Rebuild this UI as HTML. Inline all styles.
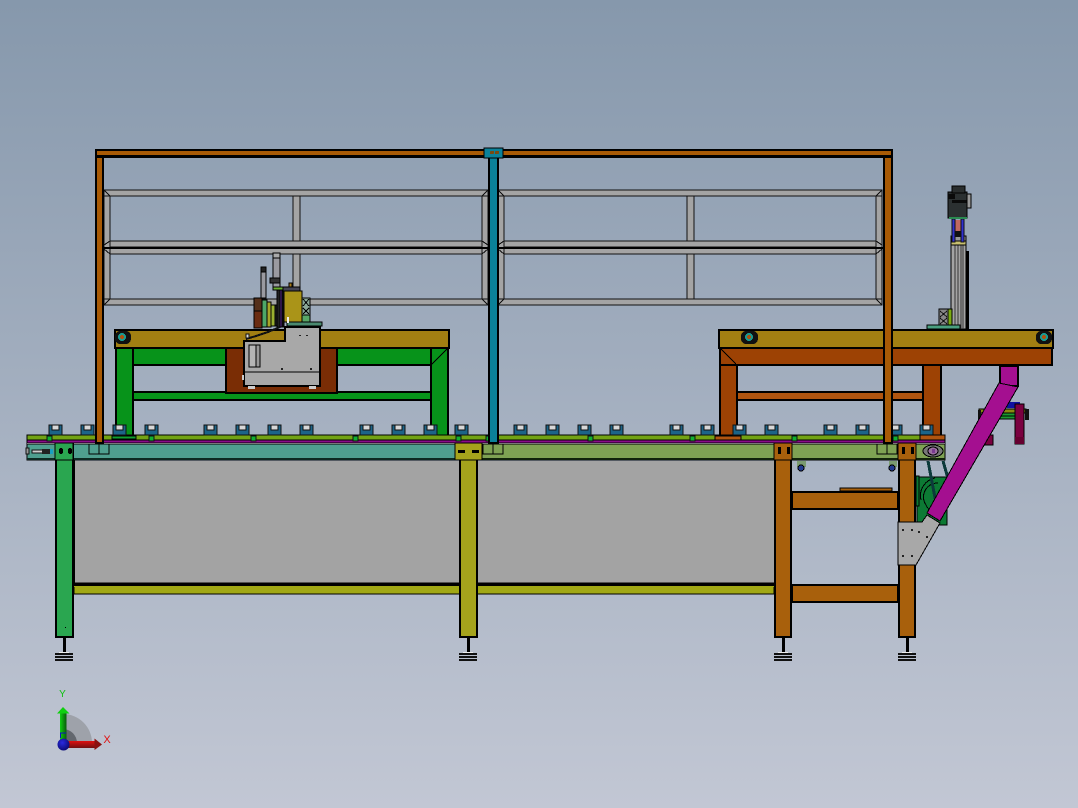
<!DOCTYPE html>
<html><head><meta charset="utf-8"><title>CAD assembly</title>
<style>html,body{margin:0;padding:0;width:1078px;height:808px;overflow:hidden}svg{display:block}</style></head>
<body>
<svg width="1078" height="808" viewBox="0 0 1078 808" xmlns="http://www.w3.org/2000/svg" shape-rendering="crispEdges">
<defs>
<linearGradient id="bg" x1="0" y1="0" x2="0" y2="1"><stop offset="0" stop-color="#8698ac"/><stop offset="1" stop-color="#c2c7d4"/></linearGradient>
<linearGradient id="rd" x1="0" y1="0" x2="0" y2="1"><stop offset="0" stop-color="#e01010"/><stop offset="1" stop-color="#701010"/></linearGradient>
<linearGradient id="gr" x1="0" y1="0" x2="1" y2="0"><stop offset="0" stop-color="#10d010"/><stop offset="1" stop-color="#0a5a0a"/></linearGradient>
<radialGradient id="bl" cx=".4" cy=".35" r=".7"><stop offset="0" stop-color="#2a2ae0"/><stop offset="1" stop-color="#0a0a70"/></radialGradient>
<g id="c"><rect x="0" y="0" width="13" height="10" fill="#1c6488" stroke="#111" stroke-width="1"/><rect x="3" y="0" width="7" height="5" fill="#d8d8d8" stroke="#111" stroke-width="1"/></g>
<g id="t"><rect x="0" y="0" width="5" height="5" fill="#10b030" stroke="#111" stroke-width="1"/></g>
<g id="f"><rect x="8" y="0" width="3" height="17" fill="#000"/><rect x="0" y="16" width="18" height="2" fill="#111"/><rect x="0" y="19" width="18" height="2" fill="#111"/><rect x="0" y="22" width="18" height="2" fill="#111"/><rect x="4" y="15" width="10" height="1" fill="#eee"/></g>
<g id="win" fill="#a4a4a4" stroke="#111" stroke-width="1">
<rect x="0" y="0" width="384" height="6"/><rect x="0" y="51" width="384" height="6"/><rect x="0" y="58" width="384" height="6"/><rect x="0" y="109" width="384" height="6"/>
<rect x="0" y="6" width="6" height="103"/><rect x="378" y="6" width="6" height="103"/>
<rect x="189" y="6" width="7" height="45"/><rect x="189" y="64" width="7" height="45"/>
<path d="M0 0L6 6M384 0L378 6M0 115L6 109M384 115L378 109M378 51L384 55M378 64L384 59M0 55L6 51M0 59L6 64" fill="none"/>
</g>
</defs>
<rect width="1078" height="808" fill="url(#bg)"/>

<!-- window frames -->
<use href="#win" x="104" y="190"/>
<use href="#win" x="498" y="190"/>
<rect x="104" y="247" width="384" height="2" fill="#000"/><rect x="498" y="247" width="385" height="2" fill="#000"/>

<!-- left table -->
<g stroke="#000" stroke-width="2">
<rect x="116" y="347" width="17" height="90" fill="#07931a"/>
<rect x="431" y="347" width="17" height="90" fill="#07931a"/>
<rect x="133" y="348" width="298" height="17" fill="#07931a"/>
<rect x="133" y="392" width="298" height="8" fill="#07931a"/>
<rect x="226" y="348" width="111" height="45" fill="#7a2d05"/>
<rect x="115" y="330" width="334" height="18" fill="#a27f12"/>
</g>
<path d="M431 365L447 349" stroke="#000" stroke-width="1" fill="none"/>
<rect x="115" y="331" width="16" height="13" rx="5" fill="#111"/><circle cx="122" cy="337" r="4" fill="#1a9a90"/><circle cx="122" cy="337" r="2" fill="#b05010"/>

<!-- head mechanisms -->
<g stroke="#000" stroke-width="1">
<rect x="261" y="272" width="5" height="26" fill="#9a9aa0"/><rect x="261" y="267" width="5" height="5" fill="#222"/>
<rect x="273" y="258" width="7" height="29" fill="#9a9aa0"/><rect x="273" y="253" width="7" height="5" fill="#aaa"/><rect x="270" y="278" width="10" height="5" fill="#333"/>
<rect x="273" y="287" width="10" height="3" fill="#6ab030"/>
<rect x="254" y="298" width="8" height="30" fill="#6a2c12"/><rect x="254" y="298" width="8" height="13" fill="#55301a"/>
<rect x="262" y="300" width="5" height="27" fill="#4ea868"/><rect x="267" y="302" width="4" height="25" fill="#a6a628"/><rect x="271" y="305" width="4" height="21" fill="#9ab030"/><rect x="275" y="305" width="2" height="21" fill="#222"/>
<rect x="277" y="290" width="3" height="37" fill="#222"/><rect x="280" y="290" width="2" height="37" fill="#5a2a90"/><rect x="282" y="290" width="2" height="37" fill="#111"/>
<rect x="284" y="291" width="18" height="31" fill="#aa9418"/>
<rect x="283" y="287" width="17" height="4" fill="#445"/><rect x="289" y="283" width="3" height="4" fill="#a87a18"/>
<rect x="302" y="298" width="8" height="17" fill="#8aa898"/><path d="M303 299L309 306M309 299L303 306M303 308L309 314M309 308L303 314" fill="none"/>
<rect x="302" y="315" width="8" height="11" fill="#58a868"/>
<rect x="287" y="322" width="35" height="4" fill="#4a8a70"/>
</g>
<rect x="287" y="317" width="2" height="6" fill="#eee"/>

<!-- grey head body -->
<path d="M244 386V341H285V327H320V386Z" fill="#a8a8a8" stroke="#000" stroke-width="2"/>
<path d="M246 339L256 336L268 332L280 327" stroke="#111" stroke-width="2" fill="none"/>
<path d="M244 372H320" stroke="#000" stroke-width="1"/>
<rect x="249" y="345" width="11" height="22" fill="#b5b5b5" stroke="#000" stroke-width="1"/><rect x="256" y="345" width="4" height="22" fill="#999" stroke="#000" stroke-width="1"/>
<rect x="248" y="386" width="7" height="3" fill="#ccc"/><rect x="309" y="386" width="7" height="3" fill="#ccc"/>
<rect x="242" y="375" width="2" height="5" fill="#ccc"/>
<rect x="246" y="334" width="3" height="4" fill="#ddd" stroke="#111" stroke-width="1"/>
<rect x="299" y="335" width="2" height="1" fill="#222"/><rect x="306" y="335" width="2" height="1" fill="#222"/><rect x="281" y="368" width="2" height="2" fill="#222"/><rect x="310" y="368" width="2" height="2" fill="#222"/>

<!-- right table -->
<g stroke="#000" stroke-width="2">
<rect x="720" y="348" width="17" height="92" fill="#9d4204"/>
<rect x="923" y="365" width="18" height="75" fill="#9d4204"/>
<rect x="737" y="392" width="186" height="8" fill="#b05510"/>
<rect x="720" y="348" width="332" height="17" fill="#9d4204"/>
<rect x="719" y="330" width="334" height="18" fill="#a27f12"/>
</g>
<path d="M721 349L736 364" stroke="#000" stroke-width="1"/>
<g><rect x="741" y="331" width="17" height="13" rx="5" fill="#111"/><circle cx="749" cy="337" r="4" fill="#1a9a90"/><circle cx="749" cy="337" r="2" fill="#b05010"/>
<rect x="1036" y="331" width="16" height="13" rx="5" fill="#111"/><circle cx="1044" cy="337" r="4" fill="#1a9a90"/><circle cx="1044" cy="337" r="2" fill="#b05010"/></g>

<!-- lifting column and motor -->
<rect x="966" y="251" width="3" height="78" fill="#000"/>
<rect x="951" y="244" width="15" height="85" fill="#a4a4a4" stroke="#000" stroke-width="1"/>
<path d="M955 244V329M958 244V329M961 244V329M963 244V329" stroke="#333" stroke-width="1"/>
<rect x="951" y="236" width="15" height="5" fill="#999" stroke="#000" stroke-width="1"/>
<rect x="951" y="241" width="15" height="4" fill="#c8c070" stroke="#000" stroke-width="1"/>
<rect x="955" y="220" width="6" height="11" fill="#c06860"/>
<rect x="955" y="231" width="6" height="6" fill="#111"/>
<rect x="952" y="219" width="3" height="23" fill="#3030d0" stroke="#111" stroke-width="1"/><rect x="961" y="219" width="3" height="23" fill="#3030d0" stroke="#111" stroke-width="1"/>
<rect x="948" y="192" width="19" height="26" fill="#2b3031" stroke="#000" stroke-width="1"/>
<rect x="952" y="186" width="13" height="7" fill="#2a2e2e" stroke="#000" stroke-width="1"/>
<path d="M948 194H955V199H948ZM952 200H967V203H952Z" fill="#0a0a0a"/>
<rect x="967" y="194" width="4" height="14" fill="#999" stroke="#000" stroke-width="1"/>
<rect x="949" y="217" width="18" height="2" fill="#2a8a50"/>
<rect x="939" y="309" width="9" height="16" fill="#888" stroke="#000" stroke-width="1"/><path d="M940 311L947 317M947 311L940 317M940 318L947 324M947 318L940 324" stroke="#111" stroke-width="1"/>
<rect x="948" y="309" width="4" height="16" fill="#7aaa10" stroke="#000" stroke-width="1"/>
<rect x="927" y="325" width="33" height="4" fill="#4aa080" stroke="#000" stroke-width="1"/>

<!-- rear assembly -->
<rect x="979" y="409" width="47" height="4" fill="#8a8a10" stroke="#000" stroke-width="1"/>
<rect x="985" y="413" width="30" height="3" fill="#1a9a30" stroke="#000" stroke-width="1"/>
<rect x="985" y="416" width="30" height="3" fill="#1a9a30" stroke="#000" stroke-width="1"/>
<rect x="978" y="410" width="3" height="10" fill="#111"/><rect x="1025" y="409" width="4" height="11" fill="#111"/>
<rect x="1007" y="402" width="13" height="6" fill="#1010a0"/>
<rect x="985" y="435" width="8" height="10" fill="#7a0040" stroke="#000" stroke-width="1"/>
<rect x="1015" y="404" width="9" height="40" fill="#7a0040" stroke="#000" stroke-width="1"/>
<rect x="1015" y="437" width="9" height="7" fill="#660030"/>

<!-- conveyor rails -->
<rect x="27" y="435" width="918" height="5" fill="#72a314" stroke="#000" stroke-width="1"/>
<rect x="27" y="440" width="918" height="3" fill="#8a0a8a" stroke="#000" stroke-width="1"/>
<rect x="27" y="443" width="918" height="1" fill="#eef2ee"/>

<!-- clamps -->
<use href="#c" x="49" y="425"/><use href="#c" x="81" y="425"/><use href="#c" x="113" y="425"/><use href="#c" x="145" y="425"/>
<use href="#c" x="204" y="425"/><use href="#c" x="236" y="425"/><use href="#c" x="268" y="425"/><use href="#c" x="300" y="425"/>
<use href="#c" x="360" y="425"/><use href="#c" x="392" y="425"/><use href="#c" x="424" y="425"/><use href="#c" x="455" y="425"/>
<use href="#c" x="514" y="425"/><use href="#c" x="546" y="425"/><use href="#c" x="578" y="425"/><use href="#c" x="610" y="425"/>
<use href="#c" x="670" y="425"/><use href="#c" x="701" y="425"/><use href="#c" x="733" y="425"/><use href="#c" x="765" y="425"/>
<use href="#c" x="824" y="425"/><use href="#c" x="856" y="425"/><use href="#c" x="889" y="425"/><use href="#c" x="920" y="425"/>
<g>
<use href="#t" x="47" y="436"/><use href="#t" x="149" y="436"/><use href="#t" x="251" y="436"/><use href="#t" x="353" y="436"/><use href="#t" x="456" y="436"/><use href="#t" x="486" y="436"/><use href="#t" x="588" y="436"/><use href="#t" x="690" y="436"/><use href="#t" x="792" y="436"/><use href="#t" x="893" y="436"/>
</g>
<rect x="112" y="436" width="24" height="3" fill="#10a030" stroke="#000" stroke-width="1"/>
<rect x="715" y="436" width="26" height="4" fill="#b05510" stroke="#000" stroke-width="1"/>
<rect x="920" y="435" width="25" height="5" fill="#b05510" stroke="#000" stroke-width="1"/>

<!-- conveyor beams -->
<rect x="27" y="444" width="430" height="16" fill="#4f9f8f" stroke="#000" stroke-width="1"/>
<rect x="27" y="458" width="430" height="2" fill="#0d2a22"/>
<rect x="478" y="444" width="467" height="16" fill="#7ea253" stroke="#000" stroke-width="1"/>
<rect x="478" y="458" width="467" height="2" fill="#10220a"/>
<rect x="32" y="450" width="18" height="3" fill="#ccc" stroke="#111" stroke-width="1"/><rect x="42" y="449" width="9" height="5" fill="#222"/><rect x="50" y="449" width="3" height="5" fill="#18a0c0"/><rect x="26" y="448" width="3" height="6" fill="#999" stroke="#111" stroke-width="1"/>

<!-- grey panels -->
<rect x="74" y="461" width="386" height="123" fill="#a3a3a3"/>
<rect x="478" y="461" width="296" height="123" fill="#a3a3a3"/>
<rect x="73" y="460" width="2" height="124" fill="#000"/>
<!-- lower bar -->
<rect x="74" y="583" width="700" height="11" fill="#a1a815" stroke="#000" stroke-width="1"/>
<rect x="74" y="583" width="700" height="3" fill="#000"/>
<rect x="74" y="586" width="700" height="1" fill="#a1a815"/>

<!-- legs -->
<g stroke="#000" stroke-width="2">
<rect x="56" y="444" width="17" height="193" fill="#2aa650"/>
<rect x="460" y="444" width="17" height="193" fill="#a5a31c"/>
<rect x="775" y="444" width="16" height="193" fill="#a8600c"/>
<rect x="899" y="444" width="16" height="193" fill="#a8600c"/>
<rect x="792" y="492" width="106" height="17" fill="#a8600c"/>
<rect x="792" y="585" width="106" height="17" fill="#a8600c"/>
<rect x="840" y="488" width="52" height="3" fill="#a8600c" stroke-width="1"/>
</g>
<rect x="65" y="627" width="1" height="1" fill="#000"/>
<use href="#f" x="55" y="637"/><use href="#f" x="459" y="637"/><use href="#f" x="774" y="637"/><use href="#f" x="898" y="637"/>

<!-- leg plates -->
<g stroke="#000" stroke-width="1">
<rect x="55" y="443" width="18" height="17" fill="#2aa650"/>
<rect x="455" y="443" width="27" height="17" fill="#a5a31c"/>
<rect x="774" y="443" width="18" height="17" fill="#a8600c"/>
<rect x="898" y="443" width="18" height="17" fill="#a8600c"/>
</g>
<g fill="#000">
<rect x="59" y="448" width="4" height="6" rx="2"/><rect x="68" y="448" width="4" height="6" rx="2"/>
<rect x="458" y="450" width="7" height="3"/><rect x="472" y="450" width="7" height="3"/>
<rect x="778" y="447" width="3" height="7"/><rect x="787" y="447" width="3" height="7"/>
<rect x="902" y="447" width="3" height="7"/><rect x="911" y="447" width="3" height="7"/>
</g>

<!-- roller under conveyor -->
<g><rect x="797" y="461" width="9" height="6" fill="#7a9a70"/><circle cx="801" cy="468" r="3" fill="#223a90" stroke="#000"/>
<rect x="889" y="461" width="8" height="6" fill="#7a9a70"/><circle cx="892" cy="468" r="3" fill="#223a90" stroke="#000"/>
<ellipse cx="933" cy="451" rx="10" ry="6" fill="#777" stroke="#000" stroke-width="1"/><ellipse cx="933" cy="451" rx="5" ry="4" fill="#9a70a0" stroke="#000" stroke-width="1"/><rect x="932" y="449" width="3" height="4" fill="#7a3a90"/></g>

<!-- green gearbox and chains -->
<rect x="917" y="477" width="30" height="48" fill="#0c7a34" stroke="#000" stroke-width="1"/>
<rect x="916" y="476" width="3" height="30" fill="#0c7a34" stroke="#000" stroke-width="1"/>
<path d="M938 483A14 14 0 0 0 926 505A12 12 0 0 0 934 512M935 478A18 18 0 0 0 921 500" fill="none" stroke="#000" stroke-width="1"/>
<path d="M928 461L936 503M943 461L949 482" stroke="#0c3a3a" stroke-width="3" fill="none"/>

<!-- gusset and magenta strut -->
<path d="M898 522H922L927 515L940 523L916 565H898Z" fill="#a8a8a8" stroke="#000" stroke-width="1"/>
<g fill="#222"><rect x="902" y="529" width="2" height="2"/><rect x="911" y="529" width="2" height="2"/><rect x="918" y="531" width="2" height="2"/><rect x="926" y="536" width="2" height="2"/><rect x="902" y="555" width="2" height="2"/><rect x="911" y="555" width="2" height="2"/></g>
<rect x="1000" y="366" width="18" height="20" fill="#a40f90" stroke="#000" stroke-width="2"/>
<path d="M999 383L1018 387L940 521L927 513Z" fill="#a40f90" stroke="#000" stroke-width="1"/>

<!-- orange frame -->
<g stroke="#000" stroke-width="2">
<rect x="96" y="150" width="7" height="293" fill="#a85a05"/>
<rect x="884" y="150" width="8" height="293" fill="#a85a05"/>
<rect x="96" y="150" width="796" height="6" fill="#a85a05"/>
</g>
<rect x="96" y="156" width="796" height="2" fill="#000"/>
<!-- post feet -->
<g fill="#4f9f8f" stroke="#000" stroke-width="1">
<rect x="89" y="444" width="10" height="10"/><rect x="99" y="444" width="10" height="10"/>
</g>
<g fill="#7ea253" stroke="#000" stroke-width="1">
<rect x="877" y="444" width="10" height="10"/><rect x="887" y="444" width="10" height="10"/>
<rect x="483" y="444" width="10" height="10"/><rect x="493" y="444" width="10" height="10"/>
</g>

<!-- blue post -->
<rect x="489" y="157" width="9" height="286" fill="#0b8199" stroke="#000" stroke-width="2"/>
<rect x="484" y="148" width="19" height="10" fill="#0b8199" stroke="#000" stroke-width="1"/>
<rect x="490" y="151" width="4" height="3" rx="1" fill="#7a4a10"/><rect x="495" y="151" width="4" height="3" rx="1" fill="#7a4a10"/>

<!-- triad -->
<g shape-rendering="geometricPrecision">
<path d="M63 743V714A29 29 0 0 1 92 743Z" fill="#9ea2aa"/>
<path d="M63 743V729A14 14 0 0 1 77 743Z" fill="#63676e"/>
<rect x="60" y="713" width="6.500" height="30" fill="url(#gr)"/>
<path d="M63 707L69.500 713.500H57Z" fill="#10d010"/>
<rect x="63" y="741" width="32" height="7" fill="url(#rd)"/>
<path d="M94.500 738.500L102 744.500L94.500 750Z" fill="#8a1010"/>
<path d="M60.500 738V733H66" fill="none" stroke="#1010c0" stroke-width="1"/>
<circle cx="63.500" cy="744.500" r="6" fill="url(#bl)"/>
<text x="62.500" y="697" font-family="'Liberation Sans',sans-serif" font-size="10" fill="#10c010" text-anchor="middle">Y</text>
<text x="107" y="743" font-family="'Liberation Sans',sans-serif" font-size="11" fill="#e01010" text-anchor="middle">X</text>
</g>
</svg>
</body></html>
